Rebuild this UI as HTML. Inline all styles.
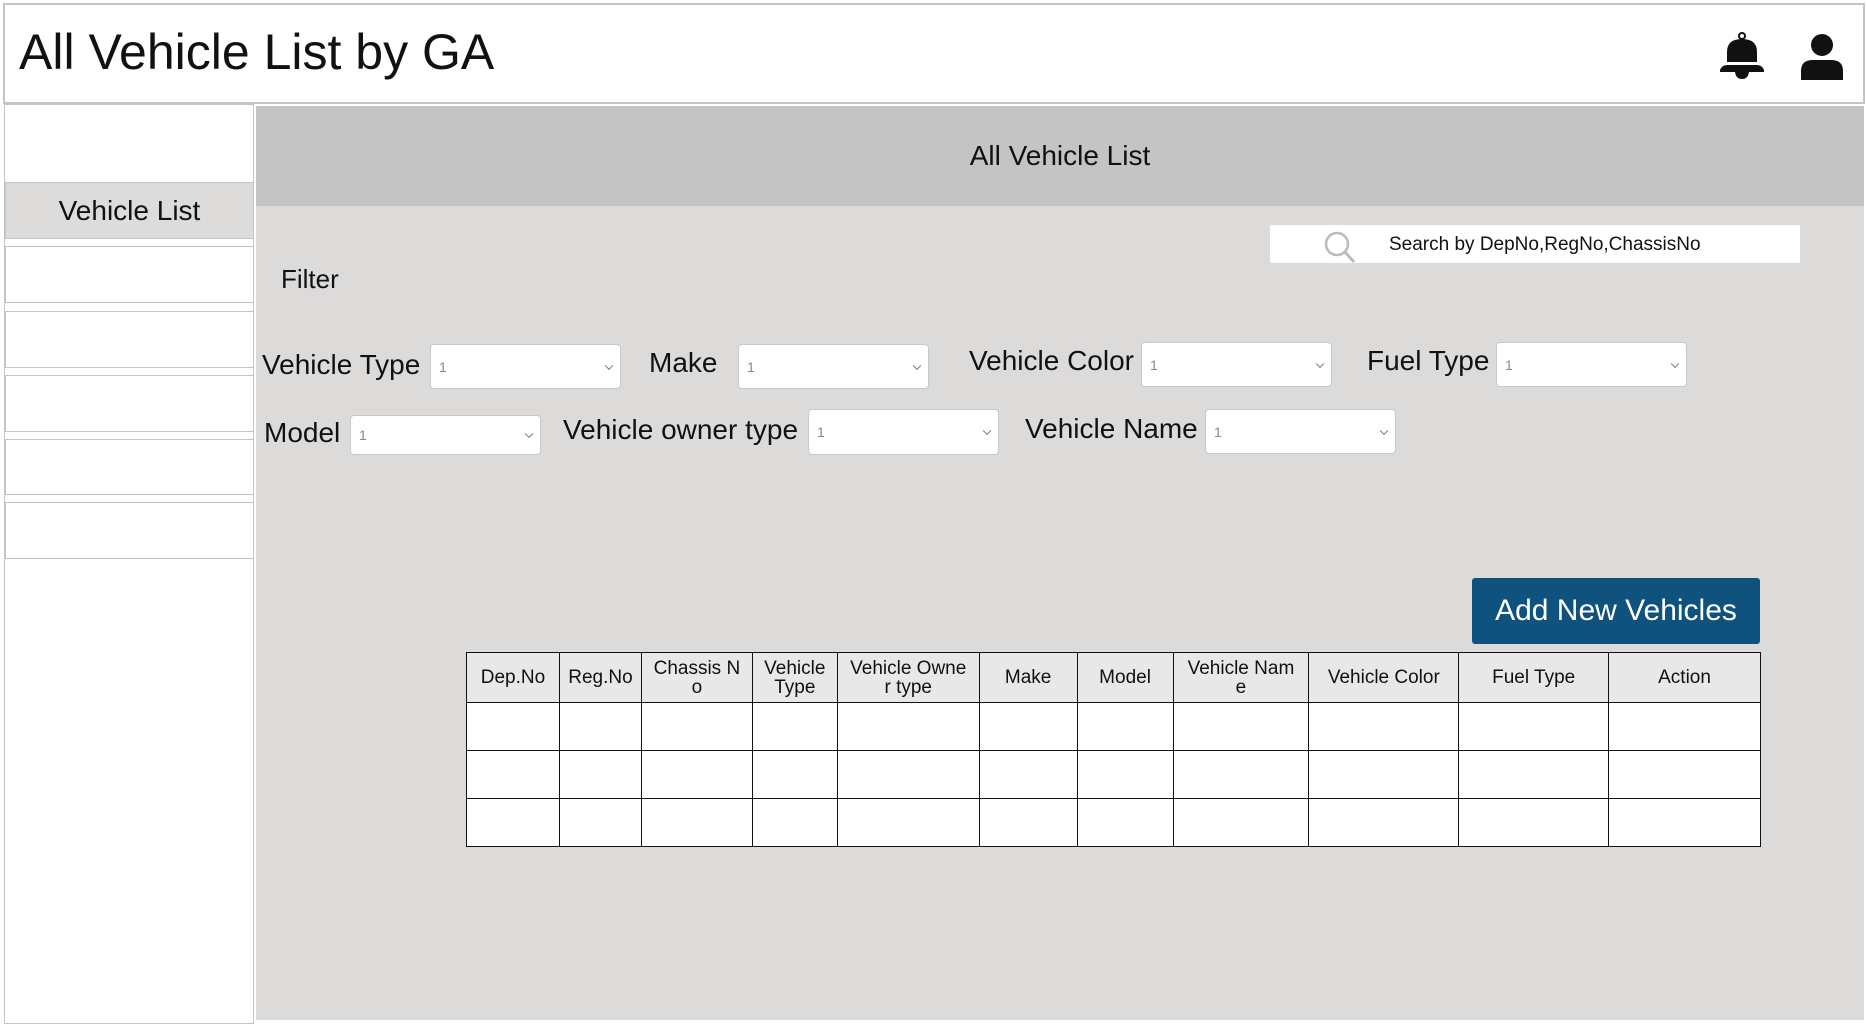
<!DOCTYPE html>
<html><head><meta charset="utf-8"><style>
*{box-sizing:border-box;margin:0;padding:0}
body{width:1866px;height:1020px;background:#fff;font-family:"Liberation Sans",sans-serif;position:relative;overflow:hidden;color:#111}
.a{position:absolute}
.hdr{left:3px;top:3px;width:1862px;height:101px;border:2px solid #c4c4c4;background:#fff}
.side{left:4px;top:104px;width:250px;height:920px;border:1px solid #c4c4c4;background:#fff}
.sb{left:5px;width:249px;border:1px solid #c4c4c4;background:#fff}
.main{left:256px;top:106px;width:1608px;height:914px;background:#dddada}
.lbl{font-size:28px;white-space:nowrap;line-height:1}
.sel{background:#fff;border:1px solid #c8c8c8;border-radius:4px;height:45px;width:191px}
.sel span{position:absolute;left:8px;top:50%;transform:translateY(-50%);font-size:14px;color:#888}
.sel i{position:absolute;right:8px;top:50%;width:6px;height:6px;border-right:1px solid #777;border-bottom:1px solid #777;transform:translateY(-70%) rotate(45deg)}
table{border-collapse:collapse;position:absolute;left:466px;top:652px;width:1295px;font-size:19px}
td{border:1.5px solid #111;height:48px;background:#fff;text-align:center;line-height:1}
tr.h td{background:#e8e8e8;height:50px}
</style></head><body>
<div class="a hdr"></div>
<div class="a" style="left:19px;top:27px;font-size:50px;line-height:1">All Vehicle List by GA</div>
<svg class="a" style="left:1718px;top:32px" width="48" height="50" viewBox="0 0 48 50"><circle cx="24" cy="4" r="3" fill="none" stroke="#111" stroke-width="2"/><path d="M9 30 V20 Q9 7 24 7 Q39 7 39 20 V30 Z" fill="#111"/><path d="M2 38 Q4 33 9 33 H39 Q44 33 46 38 V40 H2 Z" fill="#111"/><path d="M17 40 Q18 47 24 47 Q30 47 31 40 Z" fill="#111"/></svg>
<svg class="a" style="left:1800px;top:33px" width="44" height="50" viewBox="0 0 44 50"><circle cx="22" cy="12" r="11" fill="#111"/><path d="M1 47 V38 Q1 27 13 27 H31 Q43 27 43 38 V47 Z" fill="#111"/></svg>
<div class="a side"></div>
<div class="a sb" style="top:182px;height:57px;background:#dedbdb;font-size:28px;text-align:center;line-height:55px">Vehicle List</div>
<div class="a sb" style="top:246px;height:57px"></div>
<div class="a sb" style="top:311px;height:57px"></div>
<div class="a sb" style="top:375px;height:57px"></div>
<div class="a sb" style="top:439px;height:56px"></div>
<div class="a sb" style="top:502px;height:57px"></div>
<div class="a main"></div>
<div class="a" style="left:256px;top:106px;width:1608px;height:100px;background:#c4c4c4;font-size:28px;text-align:center;line-height:100px">All Vehicle List</div>
<div class="a" style="left:1270px;top:225px;width:530px;height:38px;background:#fff;border-radius:2px"></div>
<svg class="a" style="left:1320px;top:228px" width="40" height="40" viewBox="0 0 40 40"><circle cx="17" cy="16" r="11" fill="none" stroke="#bbb" stroke-width="2.5"/><path d="M25 24 L34 34" stroke="#bbb" stroke-width="3"/></svg>
<div class="a" style="left:1389px;top:234px;font-size:19px">Search by DepNo,RegNo,ChassisNo</div>
<div class="a lbl" style="left:281px;top:266px;font-size:26px">Filter</div>
<div class="a lbl" style="left:262px;top:351px">Vehicle Type</div>
<div class="a sel" style="left:430px;top:344px"><span>1</span><i></i></div>
<div class="a lbl" style="left:649px;top:349px">Make</div>
<div class="a sel" style="left:738px;top:344px"><span>1</span><i></i></div>
<div class="a lbl" style="left:969px;top:347px">Vehicle Color</div>
<div class="a sel" style="left:1141px;top:342px"><span>1</span><i></i></div>
<div class="a lbl" style="left:1367px;top:347px">Fuel Type</div>
<div class="a sel" style="left:1496px;top:342px"><span>1</span><i></i></div>
<div class="a lbl" style="left:264px;top:419px">Model</div>
<div class="a sel" style="left:350px;top:415px;height:40px"><span>1</span><i></i></div>
<div class="a lbl" style="left:563px;top:416px">Vehicle owner type</div>
<div class="a sel" style="left:808px;top:409px;height:46px"><span>1</span><i></i></div>
<div class="a lbl" style="left:1025px;top:415px">Vehicle Name</div>
<div class="a sel" style="left:1205px;top:409px;height:45px"><span>1</span><i></i></div>
<div class="a" style="left:1472px;top:578px;width:288px;height:66px;background:#10527e;border-radius:3px;color:#fff;font-size:30px;text-align:center;line-height:66px">Add New Vehicles</div>
<table>
<colgroup><col style="width:93px"><col style="width:82px"><col style="width:111px"><col style="width:85px"><col style="width:142px"><col style="width:98px"><col style="width:96px"><col style="width:136px"><col style="width:150px"><col style="width:150px"><col style="width:152px"></colgroup>
<tr class="h"><td>Dep.No</td><td>Reg.No</td><td>Chassis N<br>o</td><td>Vehicle<br>Type</td><td>Vehicle Owne<br>r type</td><td>Make</td><td>Model</td><td>Vehicle Nam<br>e</td><td>Vehicle Color</td><td>Fuel Type</td><td>Action</td></tr>
<tr><td></td><td></td><td></td><td></td><td></td><td></td><td></td><td></td><td></td><td></td><td></td></tr>
<tr><td></td><td></td><td></td><td></td><td></td><td></td><td></td><td></td><td></td><td></td><td></td></tr>
<tr><td></td><td></td><td></td><td></td><td></td><td></td><td></td><td></td><td></td><td></td><td></td></tr>
</table>
</body></html>
